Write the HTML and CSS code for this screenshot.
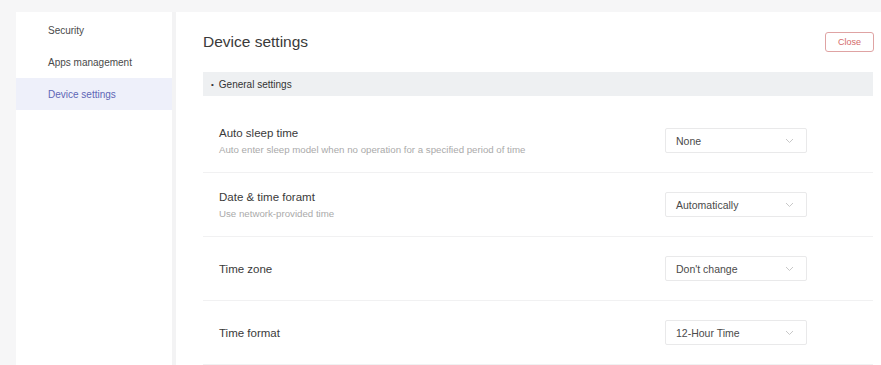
FILE: index.html
```html
<!DOCTYPE html>
<html>
<head>
<meta charset="utf-8">
<link rel="stylesheet" href="styles.css">
</head>
<body>
<div class="app">
  <aside class="sidebar">
    <div class="nav-item">Security</div>
    <div class="nav-item">Apps management</div>
    <div class="nav-item active">Device settings</div>
  </aside>
  <main class="main">
    <div class="header">
      <h1 class="title">Device settings</h1>
      <button class="close-btn">Close</button>
    </div>
    <div class="section-bar"><span class="bullet">•</span>General settings</div>
    <div class="row">
      <div class="row-text">
        <div class="row-title">Auto sleep time</div>
        <div class="row-sub">Auto enter sleep model when no operation for a specified period of time</div>
      </div>
      <div class="select"><span>None</span><svg class="chev" width="9" height="6" viewBox="0 0 9 6"><path d="M1 1l3.5 3.5L8 1" fill="none" stroke="#c8c8c8" stroke-width="1"/></svg></div>
    </div>
    <div class="row">
      <div class="row-text">
        <div class="row-title">Date &amp; time foramt</div>
        <div class="row-sub">Use network-provided time</div>
      </div>
      <div class="select"><span>Automatically</span><svg class="chev" width="9" height="6" viewBox="0 0 9 6"><path d="M1 1l3.5 3.5L8 1" fill="none" stroke="#c8c8c8" stroke-width="1"/></svg></div>
    </div>
    <div class="row">
      <div class="row-text">
        <div class="row-title">Time zone</div>
      </div>
      <div class="select"><span>Don't change</span><svg class="chev" width="9" height="6" viewBox="0 0 9 6"><path d="M1 1l3.5 3.5L8 1" fill="none" stroke="#c8c8c8" stroke-width="1"/></svg></div>
    </div>
    <div class="row">
      <div class="row-text">
        <div class="row-title">Time format</div>
      </div>
      <div class="select"><span>12-Hour Time</span><svg class="chev" width="9" height="6" viewBox="0 0 9 6"><path d="M1 1l3.5 3.5L8 1" fill="none" stroke="#c8c8c8" stroke-width="1"/></svg></div>
    </div>
  </main>
</div>
</body>
</html>
```
FILE: styles.css
```css
html, body {
  margin: 0;
  padding: 0;
  background: #f6f6f7;
  font-family: "Liberation Sans", Arial, sans-serif;
  color: #333;
}
.app {
  display: flex;
  padding-top: 12px;
  padding-left: 16px;
  height: 353px;
  overflow: hidden;
}
.sidebar {
  width: 156px;
  background: #fff;
  border-right: 4px solid #f3f3f4;
  padding-top: 2px;
  flex-shrink: 0;
}
.nav-item {
  height: 32px;
  display: flex;
  align-items: center;
  padding-left: 32px;
  font-size: 10px;
  color: #4a4a4a;
}
.nav-item.active {
  background: #eef0fa;
  color: #5e66b6;
}
.main {
  flex: 1;
  background: #fff;
  padding: 20px 8px 0 27px;
}
.header {
  display: flex;
  align-items: center;
  justify-content: space-between;
  height: 20px;
}
.title {
  margin: 0;
  font-size: 15.5px;
  font-weight: normal;
  color: #3a3a3a;
}
.close-btn {
  width: 49px;
  height: 20px;
  margin-right: -1px;
  border: 1px solid #dfa3a3;
  border-radius: 3px;
  background: #fff;
  color: #d46a6a;
  font-family: "Liberation Sans", Arial, sans-serif;
  font-size: 9px;
  padding: 0;
}
.section-bar {
  margin-top: 20px;
  height: 24px;
  background: #eef0f2;
  display: flex;
  align-items: center;
  padding-left: 8px;
  font-size: 10px;
  color: #333;
}
.bullet {
  font-size: 8px;
  margin-right: 5px;
}
.section-bar + .row {
  margin-top: 13px;
}
.row {
  height: 63px;
  border-bottom: 1px solid #f1f1f2;
  display: flex;
  align-items: center;
  justify-content: space-between;
  padding-left: 16px;
}
.row-title {
  font-size: 11.5px;
  color: #3a3a3a;
}
.row-sub {
  font-size: 9.7px;
  color: #aaa;
  margin-top: 5px;
}
.select {
  width: 142px;
  height: 25px;
  border: 1px solid #e9e9ea;
  border-radius: 2px;
  margin-right: 66px;
  display: flex;
  align-items: center;
  justify-content: space-between;
  padding: 0 12px 0 10px;
  box-sizing: border-box;
  font-size: 10.5px;
  color: #4a4a4a;
}
.chev {
  display: block;
}
```
